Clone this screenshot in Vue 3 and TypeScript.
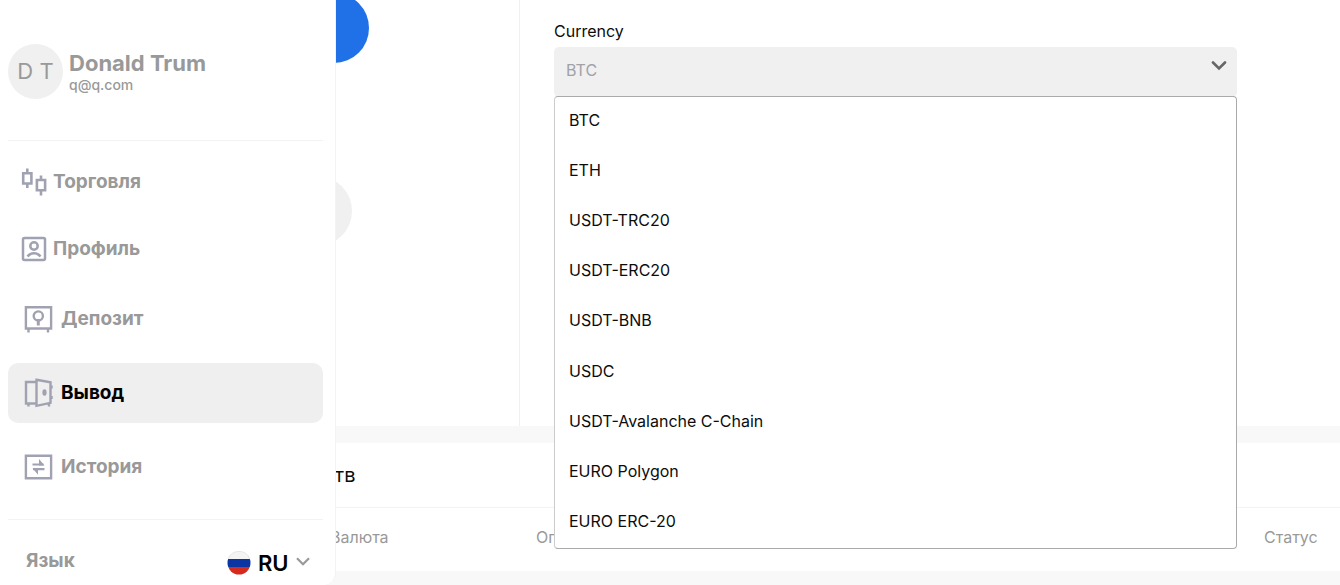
<script setup lang="ts">
import { ref } from 'vue'

const currencies: string[] = [
  'BTC',
  'ETH',
  'USDT-TRC20',
  'USDT-ERC20',
  'USDT-BNB',
  'USDC',
  'USDT-Avalanche C-Chain',
  'EURO Polygon',
  'EURO ERC-20',
]
const currency = ref('BTC')
const language = ref('RU')
</script>

<template>
  <div class="page">
    <aside class="sidebar">
      <header class="user">
        <div class="avatar">D T</div>
        <div>
          <div class="user-name">Donald Trum</div>
          <div class="user-mail">q@q.com</div>
        </div>
      </header>

      <nav class="nav">
        <div class="group compact">
          <a href="#trade" class="item">
            <svg class="icon" width="26" height="28" viewBox="0 0 26 28" fill="none" stroke="#a0a2b1" stroke-width="2.600">
              <path d="M6.300 0.500v5M6.300 15.500v4.500M2.200 5.200h8.200v10.300H2.200zM20 7.500v5M20 22.500v5M15.900 12h8.200v10.300h-8.200z" />
            </svg>
            <span>Торговля</span>
          </a>
          <a href="#profile" class="item">
            <svg class="icon" width="26" height="26" viewBox="0 0 26 26" fill="none" stroke="#a0a2b1" stroke-width="2.500">
              <rect x="2" y="2" width="22" height="22" rx="1.500" />
              <circle cx="13" cy="10" r="3.700" />
              <path d="M6.500 20.500c3.200-4.200 9.800-4.200 13 0" />
            </svg>
            <span>Профиль</span>
          </a>
        </div>
        <div class="group">
          <a href="#deposit" class="item">
            <svg class="icon" width="30" height="28" viewBox="0 0 30 28" fill="none" stroke="#a0a2b1" stroke-width="2.400">
              <path d="M1.900 2.200h25.200v21.300H1.900zM4.500 24v3.500M24 24v3.500" />
              <circle cx="14.300" cy="11" r="4.600" />
              <path d="M14.300 14v6.500" stroke-width="3" />
            </svg>
            <span>Депозит</span>
          </a>
          <a href="#withdraw" class="item active" aria-current="page">
            <svg class="icon" width="30" height="30" viewBox="0 0 30 30" fill="none" stroke="#a0a2b1" stroke-width="2.400">
              <path d="M12 4H2v21.500h10M12.500 1.800l14 2.400v20.600l-14 3zM4.500 25.500v3M25 25.500v3M27.500 7.500v3M27.500 18v3" />
              <ellipse cx="20.500" cy="14.500" rx="2.100" ry="3.200" fill="#a0a2b1" stroke="none" />
            </svg>
            <span>Вывод</span>
          </a>
          <a href="#history" class="item">
            <svg class="icon" width="30" height="26" viewBox="0 0 30 26" fill="none" stroke="#a0a2b1" stroke-width="2.400">
              <path d="M1.900 1.700h25.200v22.600H1.900z" />
              <path d="M8.500 10.500h11M9 15.200h11.500" stroke-width="2.200" />
              <path d="M15 5l5.500 6.500H15zM14 20.700l-5.500-6.500H14z" fill="#a0a2b1" stroke="none" />
            </svg>
            <span>История</span>
          </a>
        </div>
      </nav>

      <footer class="lang">
        <label for="language">Язык</label>
        <div class="lang-pick">
          <svg width="24" height="24" viewBox="0 0 24 24">
            <clipPath id="flag"><circle cx="12" cy="12" r="11.500" /></clipPath>
            <g clip-path="url(#flag)">
              <path d="M0 0h24v8H0z" fill="#f4f4f4" />
              <path d="M0 8h24v8H0z" fill="#0c35a4" />
              <path d="M0 16h24v8H0z" fill="#d52b1e" />
            </g>
            <path d="M1.200 8A11.500 11.500 0 0 1 22.800 8" fill="none" stroke="#e4e4e4" />
          </svg>
          <select id="language" v-model="language">
            <option>RU</option>
          </select>
          <svg width="14" height="12" viewBox="0 0 14 12" fill="none" stroke="#999" stroke-width="2.200">
            <path d="M1 1.200l6 6 6-6" />
          </svg>
        </div>
      </footer>
    </aside>

    <main class="main">
      <section class="withdraw">
        <div class="steps">
          <div class="step current"></div>
          <div class="step"></div>
        </div>
        <form class="form" @submit.prevent>
          <label for="currency">Currency</label>
          <div class="field">
            <select id="currency" v-model="currency">
              <option v-for="c in currencies" :key="c">{{ c }}</option>
            </select>
            <svg class="chevron" width="16" height="10" viewBox="0 0 16 10" fill="none" stroke="#666" stroke-width="2.600" stroke-linecap="round">
              <path d="M2 1.500l6 6 6-6" />
            </svg>
            <ul class="menu">
              <li v-for="c in currencies" :key="c">
                <button type="button" @click="currency = c">{{ c }}</button>
              </li>
            </ul>
          </div>
        </form>
      </section>

      <section class="history">
        <h2>Вывод средств</h2>
        <table>
          <thead>
            <tr>
              <th class="col-currency">Валюта</th>
              <th>Оп</th>
              <th class="col-status">Статус</th>
            </tr>
          </thead>
        </table>
      </section>
    </main>
  </div>
</template>

<style>
body {
  margin: 0;
  background: #f8f8f8;
}
</style>

<style scoped>
* {
  box-sizing: border-box;
}
.page {
  position: relative;
  min-height: 100vh;
  overflow: hidden;
  font-family: Inter, 'Noto Sans', sans-serif;
  font-size: 16px;
  line-height: 20px;
  color: #0c0c0c;
}
.sidebar {
  position: absolute;
  z-index: 3;
  inset: 0 auto 0 0;
  width: 336px;
  padding: 0 12px 0 8px;
  background: #fff;
  border-right: 1px solid #f3f3f3;
  border-radius: 0 0 12px 0;
  color: #999;
}
.user {
  display: flex;
  align-items: flex-start;
  gap: 6px;
  height: 141px;
  padding-top: 44px;
  border-bottom: 1px solid #f3f3f3;
}
.avatar {
  width: 55px;
  height: 55px;
  border-radius: 50%;
  background: #f0f0f0;
  font-size: 22px;
  line-height: 55px;
  text-align: center;
}
.user-name {
  padding-top: 7px;
  font-size: 22px;
  line-height: 24px;
  font-weight: 700;
}
.user-mail {
  font-size: 14px;
  font-weight: 500;
}
.nav {
  display: flex;
  flex-direction: column;
  gap: 10px;
  padding: 11px 0 22px;
  border-bottom: 1px solid #f3f3f3;
}
.group {
  display: grid;
  gap: 14px;
}
.compact {
  gap: 7px;
}
.item {
  display: flex;
  align-items: center;
  gap: 7px;
  height: 60px;
  padding-left: 16px;
  border-radius: 10px;
  color: #999;
  font-size: 19px;
  font-weight: 700;
  text-decoration: none;
}
.item .icon {
  flex: none;
}
.compact .item {
  gap: 6px;
  padding-left: 13px;
}
.active {
  background: #efefef;
  color: #000;
}
.lang {
  display: flex;
  justify-content: space-between;
  padding: 31px 13px 0 18px;
  font-size: 19px;
  font-weight: 700;
}
.lang-pick {
  display: flex;
  align-items: center;
  gap: 7px;
  height: 24px;
}
.lang-pick select {
  appearance: none;
  width: 31px;
  padding: 0;
  border: 0;
  background: none;
  color: #000;
  font: 600 22px/26px Inter, sans-serif;
}
.withdraw {
  display: flex;
  height: 426px;
  background: #fff;
}
.steps {
  flex: none;
  width: 520px;
  padding-left: 282px;
  border-right: 1px solid #f0f0f0;
}
.step {
  width: 70px;
  height: 70px;
  border-radius: 50%;
  background: #f0f0f0;
}
.step.current {
  margin: -7px 0 113px 17px;
  background: #2070e8;
}
.form {
  flex: 1;
  padding: 21px 103px 0 34px;
}
.form label {
  display: block;
  margin-bottom: 6px;
}
.field {
  position: relative;
}
.field select {
  appearance: none;
  display: block;
  width: 100%;
  height: 50px;
  padding: 0 12px 4px;
  border: 0;
  border-radius: 5px;
  background: #f0f0f0;
  color: #a0a2a8;
  font: inherit;
}
.chevron {
  position: absolute;
  top: 14px;
  right: 10px;
}
.menu {
  position: absolute;
  z-index: 2;
  top: 49px;
  left: 0;
  right: 0;
  display: grid;
  grid-auto-rows: 1fr;
  height: 453px;
  margin: 0;
  padding: 0;
  list-style: none;
  background: #fff;
  border: 1px solid #aaa;
  border-left-color: #ccc;
  border-radius: 4px;
}
.menu button {
  display: block;
  width: 100%;
  padding: 13px 14px;
  border: 0;
  background: none;
  color: #0c0c0c;
  font: inherit;
  text-align: left;
}
.history {
  margin-top: 17px;
  background: #fff;
}
.history h2 {
  margin: 0;
  padding: 22px 0 22px 206px;
  border-bottom: 1px solid #f3f3f3;
  font-size: 20px;
  font-weight: 400;
}
table {
  width: 100%;
  border-spacing: 0;
  table-layout: fixed;
}
th {
  padding: 19px 0 24px;
  color: #999;
  font-weight: 400;
  text-align: left;
}
th.col-currency {
  width: 536px;
  padding-left: 330px;
}
.col-status {
  width: 76px;
}
</style>
